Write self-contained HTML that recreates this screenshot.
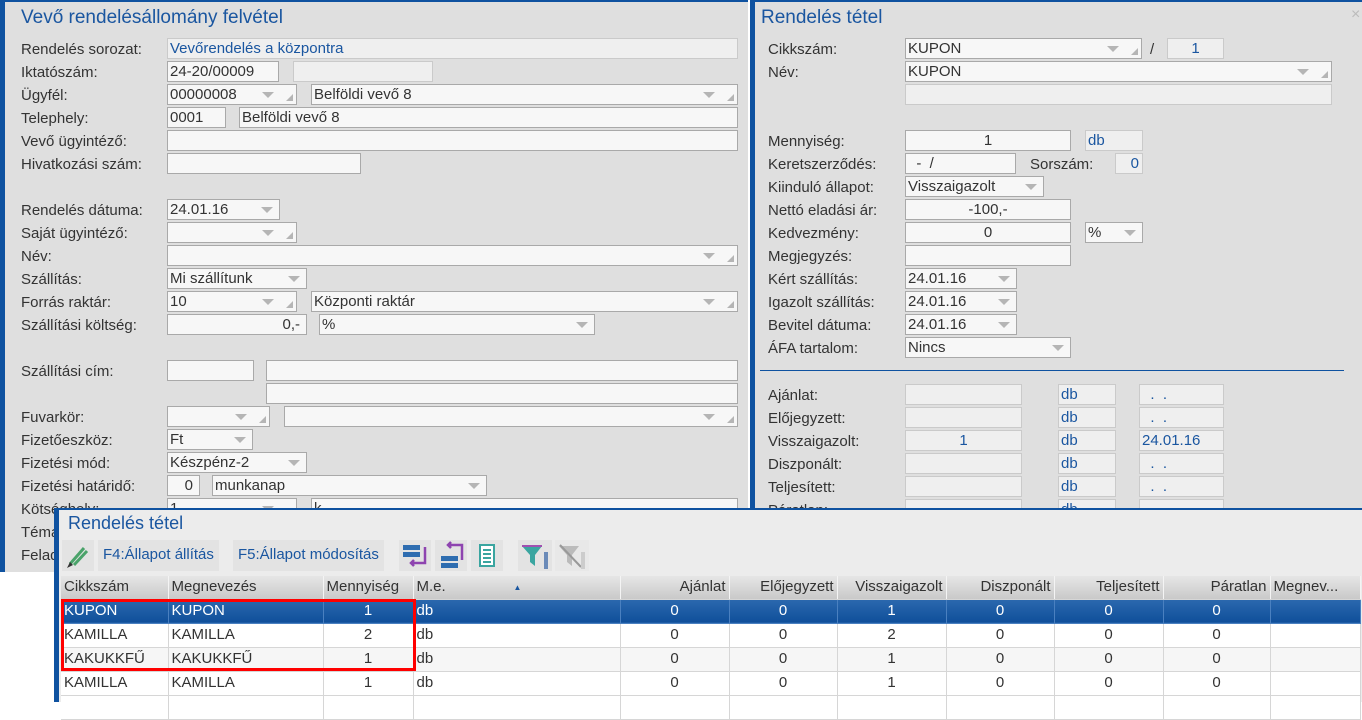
<!DOCTYPE html>
<html><head><meta charset="utf-8"><style>
*{box-sizing:border-box;margin:0;padding:0}
body{width:1362px;height:702px;overflow:hidden;background:#fff;font-family:"Liberation Sans",Arial,sans-serif;font-size:15px;color:#333;position:relative}
.a{position:absolute}
.p{position:absolute;background:#dfdfdf}
.t{position:absolute;color:#1a56a0;font-size:19px}
.l{position:absolute;white-space:nowrap;line-height:20px;margin-top:2px}
.i{position:absolute;height:21px;background:#f7f7f7;border:1px solid #a9a9a9;line-height:19px;padding:0 2px;white-space:nowrap;overflow:hidden}
.d{background:#efefef;border-color:#cacaca;color:#1a56a0}
.c{text-align:center}.r{text-align:right;padding-right:6px}
.cb::after{content:"";position:absolute;right:22px;top:7px;border-left:6px solid transparent;border-right:6px solid transparent;border-top:6px solid #b5b5b5}
.cb.g::before{content:"";position:absolute;right:3px;bottom:3px;border-left:7px solid transparent;border-bottom:7px solid #b5b5b5}
.cb.n::after{right:6px}
.btn{position:absolute;top:540px;height:31px;background:#e3e3e3;line-height:29px;color:#1a56a0;padding:0 5px;font-size:15px}
table{border-collapse:collapse;position:absolute;left:61px;top:576px;table-layout:fixed}
td,th{height:24px;border-right:1px solid #d6d6d6;border-bottom:1px solid #d6d6d6;padding:0 3px;white-space:nowrap;overflow:hidden;font-weight:normal;font-size:15px;line-height:22px}
th{background:linear-gradient(#e6e6e6,#c9c9c9);color:#333;text-align:left;border-right:1px solid #f4f4f4;height:23px}
tr.s td{background:linear-gradient(#2b68ae,#0f4f9a);color:#fff;border-color:#4a80c0}
tr.w td{background:#fff}tr.z td{background:#f6f6f6}
.ct{text-align:center}.rt{text-align:right}
</style></head><body>
<div class="p" style="left:0;top:0;width:748px;height:572px;border-top:2px solid #0f52a0;border-left:5px solid #0f52a0"></div>
<div class="t" style="left:21px;top:7px">Vevő rendelésállomány felvétel</div>
<div class="l" style="left:21px;top:38px">Rendelés sorozat:</div><div class="i d" style="left:167px;top:38px;width:571px">Vevőrendelés a központra</div>
<div class="l" style="left:21px;top:61px">Iktatószám:</div><div class="i" style="left:167px;top:61px;width:112px">24-20/00009</div><div class="i d" style="left:293px;top:61px;width:140px"></div>
<div class="l" style="left:21px;top:84px">Ügyfél:</div><div class="i cb g" style="left:167px;top:84px;width:130px">00000008</div><div class="i cb g" style="left:311px;top:84px;width:427px">Belföldi vevő 8</div>
<div class="l" style="left:21px;top:107px">Telephely:</div><div class="i" style="left:167px;top:107px;width:59px">0001</div><div class="i" style="left:239px;top:107px;width:499px">Belföldi vevő 8</div>
<div class="l" style="left:21px;top:130px">Vevő ügyintéző:</div><div class="i" style="left:167px;top:130px;width:571px"></div>
<div class="l" style="left:21px;top:153px">Hivatkozási szám:</div><div class="i" style="left:167px;top:153px;width:194px"></div>
<div class="l" style="left:21px;top:199px">Rendelés dátuma:</div><div class="i cb n" style="left:167px;top:199px;width:113px">24.01.16</div>
<div class="l" style="left:21px;top:222px">Saját ügyintéző:</div><div class="i cb g" style="left:167px;top:222px;width:130px"></div>
<div class="l" style="left:21px;top:245px">Név:</div><div class="i cb g" style="left:167px;top:245px;width:571px"></div>
<div class="l" style="left:21px;top:268px">Szállítás:</div><div class="i cb n" style="left:167px;top:268px;width:140px">Mi szállítunk</div>
<div class="l" style="left:21px;top:291px">Forrás raktár:</div><div class="i cb g" style="left:167px;top:291px;width:130px">10</div><div class="i cb g" style="left:311px;top:291px;width:427px">Központi raktár</div>
<div class="l" style="left:21px;top:314px">Szállítási költség:</div><div class="i r" style="left:167px;top:314px;width:140px">0,-</div><div class="i cb n" style="left:319px;top:314px;width:276px">%</div>
<div class="l" style="left:21px;top:360px">Szállítási cím:</div><div class="i" style="left:167px;top:360px;width:87px"></div><div class="i" style="left:266px;top:360px;width:472px"></div><div class="i" style="left:266px;top:383px;width:472px"></div>
<div class="l" style="left:21px;top:406px">Fuvarkör:</div><div class="i cb g" style="left:167px;top:406px;width:103px"></div><div class="i cb g" style="left:284px;top:406px;width:454px"></div>
<div class="l" style="left:21px;top:429px">Fizetőeszköz:</div><div class="i cb n" style="left:167px;top:429px;width:86px">Ft</div>
<div class="l" style="left:21px;top:452px">Fizetési mód:</div><div class="i cb n" style="left:167px;top:452px;width:140px">Készpénz-2</div>
<div class="l" style="left:21px;top:475px">Fizetési határidő:</div><div class="i r" style="left:167px;top:475px;width:33px">0</div><div class="i cb n" style="left:212px;top:475px;width:275px">munkanap</div>
<div class="l" style="left:21px;top:498px">Kötséghely:</div><div class="i cb g" style="left:167px;top:498px;width:130px">1</div><div class="i" style="left:311px;top:498px;width:427px">k</div>
<div class="l" style="left:21px;top:521px">Téma</div>
<div class="l" style="left:21px;top:544px">Feladat</div>
<div class="p" style="left:750px;top:0;width:612px;height:520px;border-top:2px solid #0f52a0;border-left:5px solid #0f52a0"></div>
<div class="a" style="left:1351px;top:6px;color:#bbb;font-size:16px">×</div>
<div class="t" style="left:761px;top:7px">Rendelés tétel</div>
<div class="l" style="left:768px;top:38px">Cikkszám:</div><div class="i cb g" style="left:905px;top:38px;width:237px">KUPON</div><div class="l" style="left:1150px;top:38px">/</div><div class="i d c" style="left:1167px;top:38px;width:57px">1</div>
<div class="l" style="left:768px;top:61px">Név:</div><div class="i cb g" style="left:905px;top:61px;width:427px">KUPON</div>
<div class="i d" style="left:905px;top:84px;width:427px"></div>
<div class="l" style="left:768px;top:130px">Mennyiség:</div><div class="i c" style="left:905px;top:130px;width:166px">1</div><div class="i d" style="left:1085px;top:130px;width:58px">db</div>
<div class="l" style="left:768px;top:153px">Keretszerződés:</div><div class="i" style="left:905px;top:153px;width:111px">&nbsp; - &nbsp;/</div><div class="l" style="left:1030px;top:153px">Sorszám:</div><div class="i d r" style="left:1115px;top:153px;width:28px;padding-right:3px">0</div>
<div class="l" style="left:768px;top:176px">Kiinduló állapot:</div><div class="i cb n" style="left:905px;top:176px;width:139px">Visszaigazolt</div>
<div class="l" style="left:768px;top:199px">Nettó eladási ár:</div><div class="i c" style="left:905px;top:199px;width:166px">-100,-</div>
<div class="l" style="left:768px;top:222px">Kedvezmény:</div><div class="i c" style="left:905px;top:222px;width:166px">0</div><div class="i cb n" style="left:1085px;top:222px;width:58px">%</div>
<div class="l" style="left:768px;top:245px">Megjegyzés:</div><div class="i" style="left:905px;top:245px;width:166px"></div>
<div class="l" style="left:768px;top:268px">Kért szállítás:</div><div class="i cb n" style="left:905px;top:268px;width:112px">24.01.16</div>
<div class="l" style="left:768px;top:291px">Igazolt szállítás:</div><div class="i cb n" style="left:905px;top:291px;width:112px">24.01.16</div>
<div class="l" style="left:768px;top:314px">Bevitel dátuma:</div><div class="i cb n" style="left:905px;top:314px;width:112px">24.01.16</div>
<div class="l" style="left:768px;top:337px">ÁFA tartalom:</div><div class="i cb n" style="left:905px;top:337px;width:166px">Nincs</div>
<div class="a" style="left:760px;top:370px;width:584px;height:1px;background:#0f52a0"></div>
<div class="l" style="left:768px;top:384px">Ajánlat:</div><div class="i d" style="left:905px;top:384px;width:117px"></div><div class="i d" style="left:1058px;top:384px;width:58px">db</div><div class="i d" style="left:1139px;top:384px;width:85px">&nbsp; . &nbsp;.</div>
<div class="l" style="left:768px;top:407px">Előjegyzett:</div><div class="i d" style="left:905px;top:407px;width:117px"></div><div class="i d" style="left:1058px;top:407px;width:58px">db</div><div class="i d" style="left:1139px;top:407px;width:85px">&nbsp; . &nbsp;.</div>
<div class="l" style="left:768px;top:430px">Visszaigazolt:</div><div class="i d c" style="left:905px;top:430px;width:117px">1</div><div class="i d" style="left:1058px;top:430px;width:58px">db</div><div class="i d" style="left:1139px;top:430px;width:85px">24.01.16</div>
<div class="l" style="left:768px;top:453px">Diszponált:</div><div class="i d" style="left:905px;top:453px;width:117px"></div><div class="i d" style="left:1058px;top:453px;width:58px">db</div><div class="i d" style="left:1139px;top:453px;width:85px">&nbsp; . &nbsp;.</div>
<div class="l" style="left:768px;top:476px">Teljesített:</div><div class="i d" style="left:905px;top:476px;width:117px"></div><div class="i d" style="left:1058px;top:476px;width:58px">db</div><div class="i d" style="left:1139px;top:476px;width:85px">&nbsp; . &nbsp;.</div>
<div class="l" style="left:768px;top:499px">Páratlan:</div><div class="i d" style="left:905px;top:499px;width:117px"></div><div class="i d" style="left:1058px;top:499px;width:58px">db</div><div class="i d" style="left:1139px;top:499px;width:85px"></div>
<div class="a" style="left:54px;top:508px;width:1308px;height:194px;background:#ececec;border-top:2px solid #0f52a0;border-left:5px solid #0f52a0"></div>
<div class="t" style="left:68px;top:513px;font-size:18px">Rendelés tétel</div>
<div class="btn" style="left:62px;width:32px;padding:0">
<svg width="32" height="31" viewBox="0 0 32 31"><path d="M8 24 L22 8 M12 25 L25 11" stroke="#4aa36a" stroke-width="3" fill="none"/><path d="M5 28 L8 22 L11 25 Z" fill="#333"/></svg></div>
<div class="btn" style="left:98px">F4:Állapot állítás</div>
<div class="btn" style="left:233px">F5:Állapot módosítás</div>
<div class="btn" style="left:399px;width:32px;padding:0"><svg width="32" height="31"><rect x="4" y="5" width="17" height="5" fill="#2e6db0"/><rect x="4" y="12" width="17" height="5" fill="#2e6db0"/><path d="M26 7 V23 H12 M15 20 L12 23 L15 26" stroke="#8e44b0" stroke-width="2.5" fill="none"/></svg></div>
<div class="btn" style="left:435px;width:32px;padding:0"><svg width="32" height="31"><rect x="6" y="16" width="17" height="5" fill="#2e6db0"/><rect x="6" y="23" width="17" height="5" fill="#2e6db0"/><path d="M27 20 V5 H13 M16 2 L13 5 L16 8" stroke="#8e44b0" stroke-width="2.5" fill="none"/></svg></div>
<div class="btn" style="left:471px;width:32px;padding:0"><svg width="32" height="31"><rect x="9" y="5" width="14" height="21" fill="#fff" stroke="#3aa5a0" stroke-width="2"/><path d="M12 10h8M12 14h8M12 18h8M12 22h8" stroke="#3aa5a0" stroke-width="2"/></svg></div>
<div class="btn" style="left:518px;width:34px;padding:0"><svg width="34" height="31"><path d="M4 6 H24 L17 15 V26 L12 22 V15 Z" fill="#3aa5a0"/><rect x="4" y="5" width="20" height="2" fill="#a050b0"/><rect x="26" y="12" width="4" height="17" fill="#6a8ab8"/></svg></div>
<div class="btn" style="left:555px;width:34px;padding:0;background:#e8e8e8"><svg width="34" height="31"><path d="M4 6 H24 L17 15 V26 L12 22 V15 Z" fill="#bbb"/><path d="M5 5 L26 27" stroke="#999" stroke-width="2"/><rect x="26" y="12" width="4" height="17" fill="#ccc"/></svg></div>
<table>
<colgroup><col style="width:107px"><col style="width:155px"><col style="width:90px"><col style="width:207px"><col style="width:109px"><col style="width:108px"><col style="width:109px"><col style="width:108px"><col style="width:109px"><col style="width:107px"><col style="width:90px"></colgroup>
<tr><th>Cikkszám</th><th>Megnevezés</th><th>Mennyiség</th><th style="position:relative">M.e.<span style="position:absolute;left:100px;top:1px;font-size:8px;color:#1a56a0">▲</span></th><th class="rt">Ajánlat</th><th class="rt">Előjegyzett</th><th class="rt">Visszaigazolt</th><th class="rt">Diszponált</th><th class="rt">Teljesített</th><th class="rt">Páratlan</th><th>Megnev...</th></tr>
<tr class="s"><td>KUPON</td><td>KUPON</td><td class="ct">1</td><td>db</td><td class="ct">0</td><td class="ct">0</td><td class="ct">1</td><td class="ct">0</td><td class="ct">0</td><td class="ct">0</td><td></td></tr>
<tr class="w"><td>KAMILLA</td><td>KAMILLA</td><td class="ct">2</td><td>db</td><td class="ct">0</td><td class="ct">0</td><td class="ct">2</td><td class="ct">0</td><td class="ct">0</td><td class="ct">0</td><td></td></tr>
<tr class="z"><td>KAKUKKFŰ</td><td>KAKUKKFŰ</td><td class="ct">1</td><td>db</td><td class="ct">0</td><td class="ct">0</td><td class="ct">1</td><td class="ct">0</td><td class="ct">0</td><td class="ct">0</td><td></td></tr>
<tr class="w"><td>KAMILLA</td><td>KAMILLA</td><td class="ct">1</td><td>db</td><td class="ct">0</td><td class="ct">0</td><td class="ct">1</td><td class="ct">0</td><td class="ct">0</td><td class="ct">0</td><td></td></tr>
<tr class="w"><td></td><td></td><td></td><td></td><td></td><td></td><td></td><td></td><td></td><td></td><td></td></tr>
</table>
<div class="a" style="left:61px;top:599px;width:355px;height:72px;border:3px solid #f00"></div>
</body></html>
